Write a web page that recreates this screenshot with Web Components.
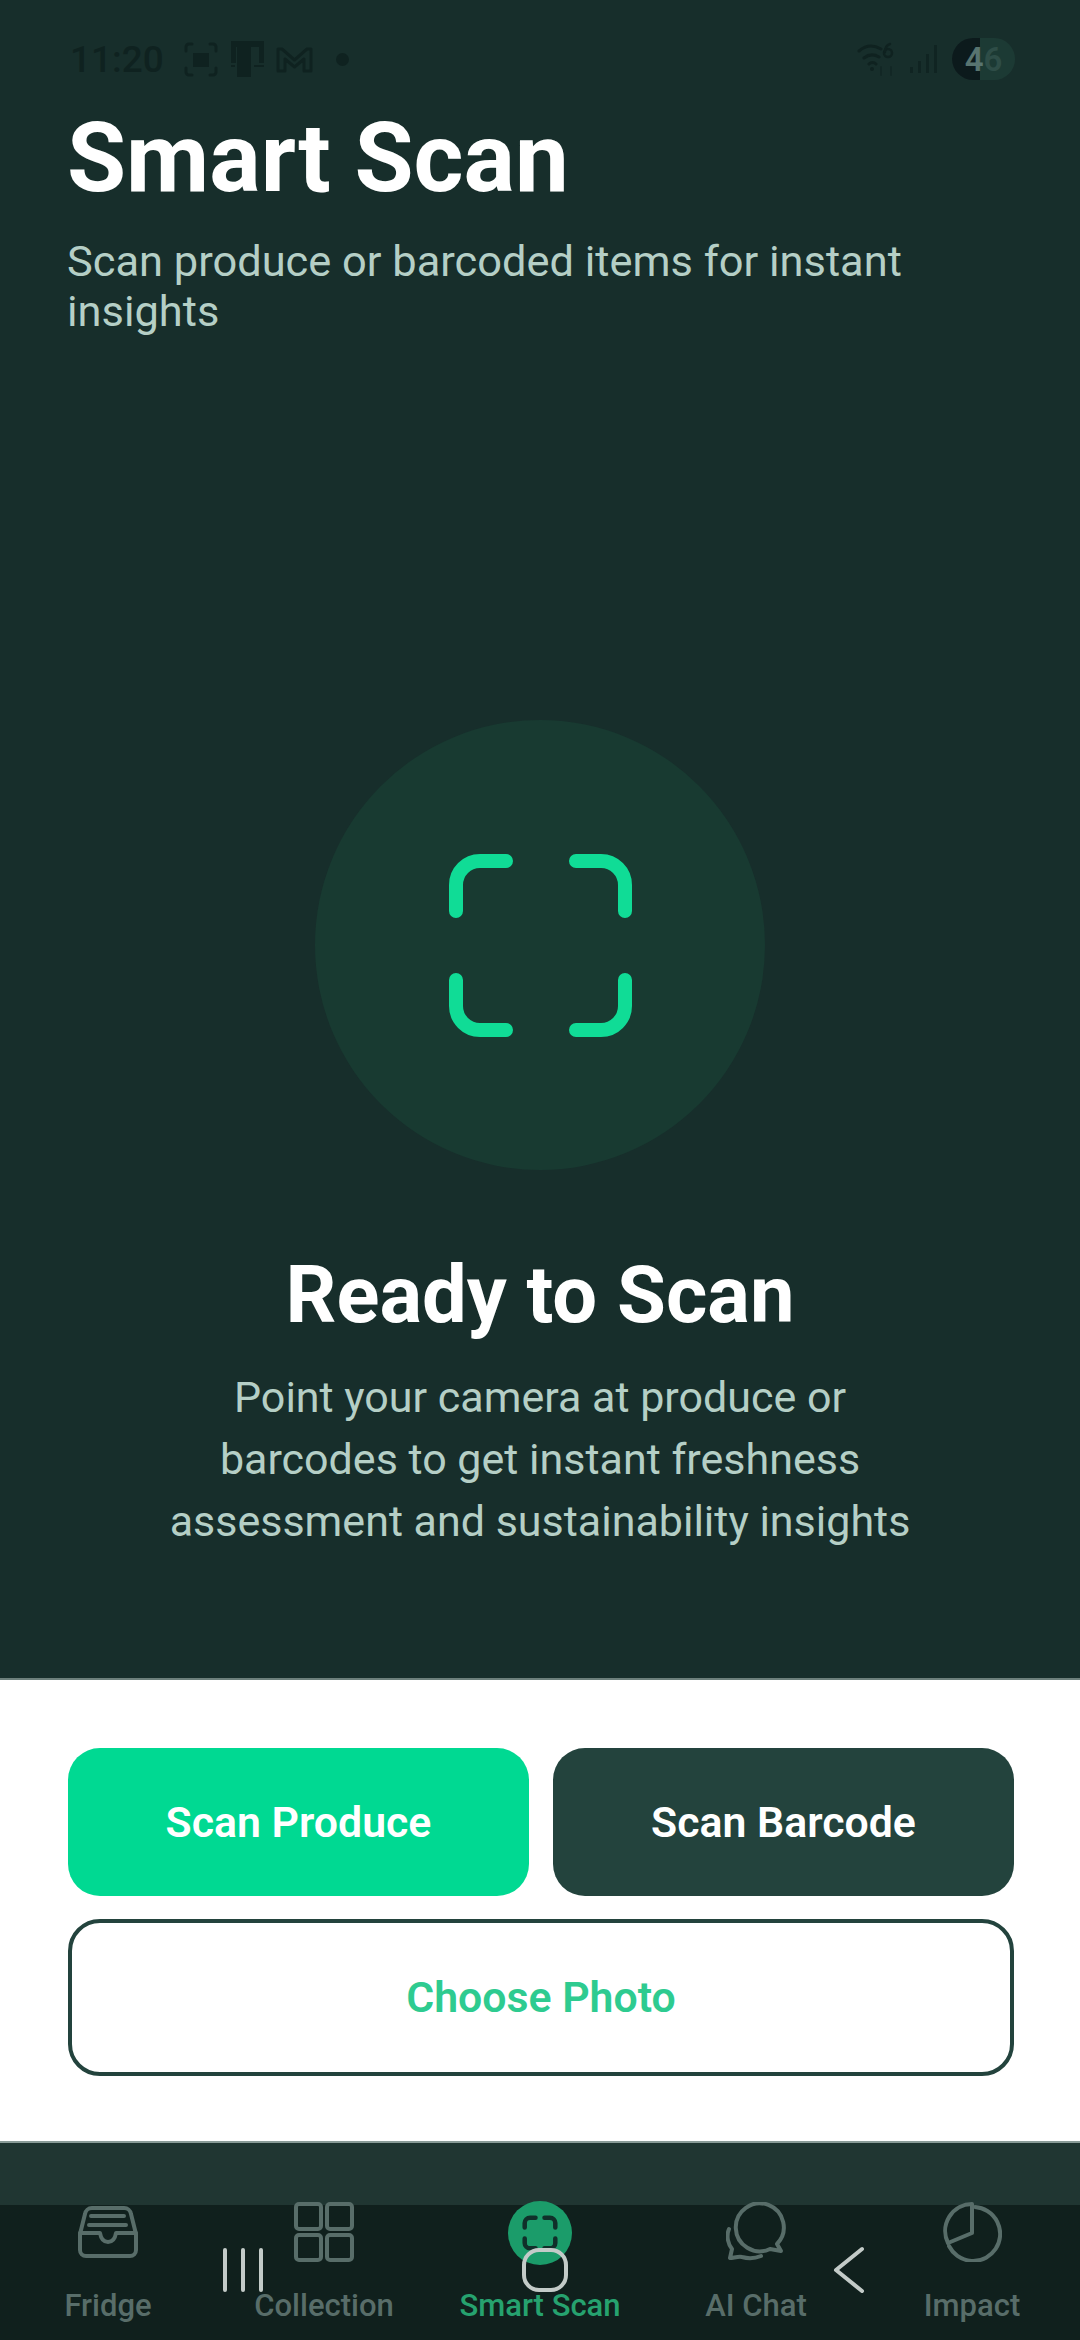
<!DOCTYPE html>
<html>
<head>
<meta charset="utf-8">
<title>Smart Scan</title>
<style>
  html, body { margin: 0; padding: 0; }
  body { width: 1080px; height: 2340px; overflow: hidden; background: #172e2b; font-family: Roboto, "Liberation Sans", sans-serif; }
  scan-app { height: 2340px; }
</style>
</head>
<body>
<scan-app>
  <status-bar slot="status"></status-bar>
  <scan-header slot="header" heading="Smart Scan">Scan produce or barcoded items for instant insights</scan-header>
  <scan-hero slot="hero" heading="Ready to Scan">Point your camera at produce or<br>barcodes to get instant freshness<br>assessment and sustainability insights</scan-hero>
  <scan-actions slot="actions">
    <scan-button kind="primary">Scan Produce</scan-button>
    <scan-button kind="dark">Scan Barcode</scan-button>
    <scan-button kind="outline" wide>Choose Photo</scan-button>
  </scan-actions>
  <tab-bar slot="tabs">
    <tab-item label="Fridge" icon="fridge"></tab-item>
    <tab-item label="Collection" icon="collection"></tab-item>
    <tab-item label="Smart Scan" icon="scan" active></tab-item>
    <tab-item label="AI Chat" icon="chat"></tab-item>
    <tab-item label="Impact" icon="impact"></tab-item>
  </tab-bar>
</scan-app>

<script>
class ScanApp extends HTMLElement {
  constructor() {
    super();
    this.attachShadow({ mode: 'open' });
    this.shadowRoot.innerHTML = `
      <style>
        :host { display: flex; flex-direction: column; width: 1080px; background: #172e2b; }
        #top { flex: 1; display: flex; flex-direction: column; min-height: 0; }
      </style>
      <div id="top">
        <slot name="status"></slot>
        <slot name="header"></slot>
        <slot name="hero"></slot>
      </div>
      <slot name="actions"></slot>
      <slot name="tabs"></slot>
    `;
  }
}

class StatusBar extends HTMLElement {
  constructor() {
    super();
    this.attachShadow({ mode: 'open' });
    this.shadowRoot.innerHTML = `
      <style>
        :host { display: flex; align-items: center; justify-content: space-between; height: 58px; padding: 30px 65px 0 70px; color: #0f2220; }
        #left, #right { display: flex; align-items: center; }
        #time { font: 500 37px/1 Roboto, sans-serif; margin-right: 20px; }
        svg { display: block; }
        #pill { width: 63px; height: 42px; border-radius: 21px; margin-left: 15px; display: flex; align-items: center; justify-content: center;
          background: linear-gradient(90deg, #0c1a1c 0 45%, #1c3a34 45%); font: 600 33px/1 Roboto, sans-serif; }
        #pill b { font-weight: 600; color: #587470; }
        #pill i { font-style: normal; color: #2e4d47; }
      </style>
      <div id="left">
        <span id="time">11:20</span>
        <svg width="34" height="35" viewBox="0 0 34 35" fill="none" stroke="currentColor" stroke-width="3" stroke-linecap="round">
          <path d="M8 2H5a3 3 0 0 0-3 3v4M26 2h3a3 3 0 0 1 3 3v4M8 33H5a3 3 0 0 1-3-3v-4M26 33h3a3 3 0 0 0 3-3v-4"/>
          <rect x="9" y="11" width="16" height="14" fill="currentColor" stroke="none"/>
        </svg>
        <svg style="margin-left:13px" width="33" height="36" viewBox="0 0 33 36" fill="currentColor">
          <rect x="0" y="0" width="33" height="6"/><rect x="0" y="0" width="5" height="22"/><rect x="28" y="0" width="5" height="22"/>
          <rect x="6" y="4" width="14" height="32"/><rect x="-1" y="24" width="5" height="2"/><rect x="23" y="24" width="10" height="2"/>
        </svg>
        <svg style="margin-left:12px" width="37" height="27" viewBox="0 0 37 27" fill="none" stroke="currentColor" stroke-width="3" stroke-linejoin="round">
          <path d="M2 25V3h4l12.500 11L31 3h4v22h-7V13l-9.500 8L9 13v12z"/>
        </svg>
        <svg style="margin-left:23px" width="13" height="13" viewBox="0 0 13 13"><circle cx="6.500" cy="6.500" r="6.500" fill="currentColor"/></svg>
      </div>
      <div id="right">
        <svg width="38" height="34" viewBox="0 0 38 34" fill="none" stroke="currentColor" stroke-width="3" stroke-linecap="round">
          <path d="M2 9c7-6 15-6 22-2M7 16c5-4 10-4 15-1M12 22c2-2 5-2 7 0"/>
          <circle cx="15" cy="27" r="2" fill="currentColor" stroke="none"/>
          <circle cx="31" cy="11" r="4" stroke-width="2.500"/><path d="M28 10c0-4 2-7 5-8" stroke-width="2.500"/>
          <path d="M24 25v8M34 25v8" stroke-width="2" opacity=".55"/>
        </svg>
        <svg style="margin-left:15px" width="27" height="28" viewBox="0 0 27 28" fill="currentColor" opacity=".8">
          <rect x="0" y="22" width="3" height="6"/><rect x="8" y="16" width="3" height="12"/><rect x="16" y="9" width="3" height="19"/><rect x="24" y="0" width="3" height="28"/>
        </svg>
        <div id="pill"><span><b>4</b><i>6</i></span></div>
      </div>
    `;
  }
}

class ScanHeader extends HTMLElement {
  constructor() {
    super();
    this.attachShadow({ mode: 'open' });
    this.shadowRoot.innerHTML = `
      <style>
        :host { display: block; padding: 20px 140px 0 67px; }
        h1 { margin: 0; font: 700 96px/100px Roboto, sans-serif; color: #fff; }
        p { margin: 29px 0 0; font: 400 43.400px/50px Roboto, sans-serif; color: #b5cfc6; }
      </style>
      <h1></h1>
      <p><slot></slot></p>
    `;
    this.shadowRoot.querySelector('h1').textContent = this.getAttribute('heading');
  }
}

class ScanHero extends HTMLElement {
  constructor() {
    super();
    this.attachShadow({ mode: 'open' });
    this.shadowRoot.innerHTML = `
      <style>
        :host { display: flex; flex: 1; flex-direction: column; align-items: center; padding-top: 383px; }
        #disc { width: 450px; height: 450px; border-radius: 50%; background: #183a31; display: flex; align-items: center; justify-content: center; }
        h2 { margin: 83px 0 0; font: 700 79.500px/84px Roboto, sans-serif; color: #fff; }
        p { margin: 29px 0 0; font: 400 43px/62px Roboto, sans-serif; color: #b5cfc6; text-align: center; }
      </style>
      <div id="disc">
        <svg width="183" height="183" viewBox="0 0 183 183" fill="none" stroke="#10dc96" stroke-width="14" stroke-linecap="round" stroke-linejoin="round">
          <path d="M7 57V31a24 24 0 0 1 24-24h26"/>
          <path d="M127 7h25a24 24 0 0 1 24 24v26"/>
          <path d="M7 126v26a24 24 0 0 0 24 24h26"/>
          <path d="M127 176h25a24 24 0 0 0 24-24v-26"/>
        </svg>
      </div>
      <h2></h2>
      <p><slot></slot></p>
    `;
    this.shadowRoot.querySelector('h2').textContent = this.getAttribute('heading');
  }
}

class ScanActions extends HTMLElement {
  constructor() {
    super();
    this.attachShadow({ mode: 'open' });
    this.shadowRoot.innerHTML = `
      <style>
        :host { display: grid; grid-template-columns: 1fr 1fr; column-gap: 24px; row-gap: 23px; height: 465px; box-sizing: border-box;
          padding: 68px 66px 0 68px; background: #fff; border-top: 2px solid #6d807c; border-bottom: 2px solid #8a9c98; grid-template-rows: 148px 157px; }
      </style>
      <slot></slot>
    `;
  }
}

class ScanButton extends HTMLElement {
  constructor() {
    super();
    this.attachShadow({ mode: 'open' });
    this.shadowRoot.innerHTML = `
      <style>
        :host { display: flex; align-items: center; justify-content: center; box-sizing: border-box; border-radius: 32px;
          font: 600 42.800px/1 Roboto, sans-serif; color: #fff; }
        :host([kind="primary"]) { background: #00d992; }
        :host([kind="dark"]) { background: #23433d; }
        :host([kind="outline"]) { background: #fff; border: 4px solid #23433d; color: #2ecb90; }
        :host([wide]) { grid-column: 1 / -1; }
      </style>
      <slot></slot>
    `;
  }
}

const TAB_ICONS = {
  fridge: `<svg width="60" height="52" viewBox="0 0 60 52" fill="none" stroke="currentColor" stroke-width="4" stroke-linecap="round" stroke-linejoin="round">
      <path d="M2 28 7 8a7 7 0 0 1 7-6h32a7 7 0 0 1 7 6l5 20v16a6 6 0 0 1-6 6H8a6 6 0 0 1-6-6z"/>
      <path d="M2 27h20c1 6 4 9 8 9s7-3 8-9h20"/>
      <path d="M13 10h33M11 19h37"/>
    </svg>`,
  collection: `<svg width="60" height="60" viewBox="0 0 60 60" fill="none" stroke="currentColor" stroke-width="4" stroke-linejoin="round">
      <rect x="2" y="2" width="25" height="25" rx="3"/><rect x="33" y="2" width="25" height="25" rx="3"/>
      <rect x="2" y="33" width="25" height="25" rx="3"/><rect x="33" y="33" width="25" height="25" rx="3"/>
    </svg>`,
  scan: `<span id="badge"><svg width="36" height="36" viewBox="0 0 40 40" fill="none" stroke="#10302a" stroke-width="5" stroke-linecap="round">
      <path d="M3 14V9a6 6 0 0 1 6-6h6M25 3h6a6 6 0 0 1 6 6v5M3 26v5a6 6 0 0 0 6 6h6M25 37h6a6 6 0 0 0 6-6v-5"/>
    </svg></span>`,
  chat: `<svg width="60" height="60" viewBox="0 0 60 60" fill="none" stroke="currentColor" stroke-width="4" stroke-linecap="round" stroke-linejoin="round">
      <path d="M51 42A24 24 0 1 0 44 47L55 49z"/>
      <path d="M3 27c-3 7-1 15 3 20l-2 9c3 0 9-2 12-1 7 2 14 1 19-1"/>
    </svg>`,
  impact: `<svg width="60" height="60" viewBox="0 0 60 60" fill="none" stroke="currentColor" stroke-width="4" stroke-linecap="round" stroke-linejoin="round">
      <path d="M30 2V31L6 41A27 27 0 0 1 30 2z"/>
      <path d="M33 5A27 27 0 1 1 7 44"/>
    </svg>`
};

class TabItem extends HTMLElement {
  constructor() {
    super();
    this.attachShadow({ mode: 'open' });
    this.shadowRoot.innerHTML = `
      <style>
        :host { display: flex; flex-direction: column; align-items: center; flex: 1; color: #586d69; }
        :host([active]) { color: #26a26f; }
        #icon { height: 62px; margin-top: -4px; display: flex; align-items: center; justify-content: center; }
        #badge { width: 64px; height: 64px; margin-top: 2px; border-radius: 50%; background: #1b9c6a; display: flex; align-items: center; justify-content: center; }
        #label { margin-top: 25px; font: 500 31px/36px Roboto, sans-serif; white-space: nowrap; }
      </style>
      <div id="icon">${TAB_ICONS[this.getAttribute('icon')]}</div>
      <div id="label"></div>
    `;
    this.shadowRoot.querySelector('#label').textContent = this.getAttribute('label');
  }
}

class TabBar extends HTMLElement {
  constructor() {
    super();
    this.attachShadow({ mode: 'open' });
    this.shadowRoot.innerHTML = `
      <style>
        :host { display: block; position: relative; }
        #strip { height: 62px; background: #203632; }
        #tabs { display: flex; height: 135px; box-sizing: border-box; background: #10201d; }
        /* system nav buttons float on top of the tab bar */
        #nav { position: absolute; left: 0; top: 0; width: 100%; height: 100%; pointer-events: none; color: #c3cbc8; }
        #nav svg { position: absolute; }
      </style>
      <div id="strip"></div>
      <div id="tabs"><slot></slot></div>
      <div id="nav">
        <svg style="left:221px;top:104px" width="44" height="46" viewBox="0 0 44 46" fill="none" stroke="currentColor" stroke-width="4" stroke-linecap="round">
          <path d="M4 3v40M22 3v40M40 3v40"/>
        </svg>
        <svg style="left:521px;top:104px" width="48" height="46" viewBox="0 0 48 46" fill="none" stroke="currentColor" stroke-width="4">
          <rect x="3" y="3" width="42" height="40" rx="15"/>
        </svg>
        <svg style="left:832px;top:103px" width="34" height="48" viewBox="0 0 34 48" fill="none" stroke="currentColor" stroke-width="4" stroke-linecap="round" stroke-linejoin="round">
          <path d="M30 3 4 24l26 21"/>
        </svg>
      </div>
    `;
  }
}

customElements.define('scan-app', ScanApp);
customElements.define('status-bar', StatusBar);
customElements.define('scan-header', ScanHeader);
customElements.define('scan-hero', ScanHero);
customElements.define('scan-actions', ScanActions);
customElements.define('scan-button', ScanButton);
customElements.define('tab-item', TabItem);
customElements.define('tab-bar', TabBar);
</script>
</body>
</html>
